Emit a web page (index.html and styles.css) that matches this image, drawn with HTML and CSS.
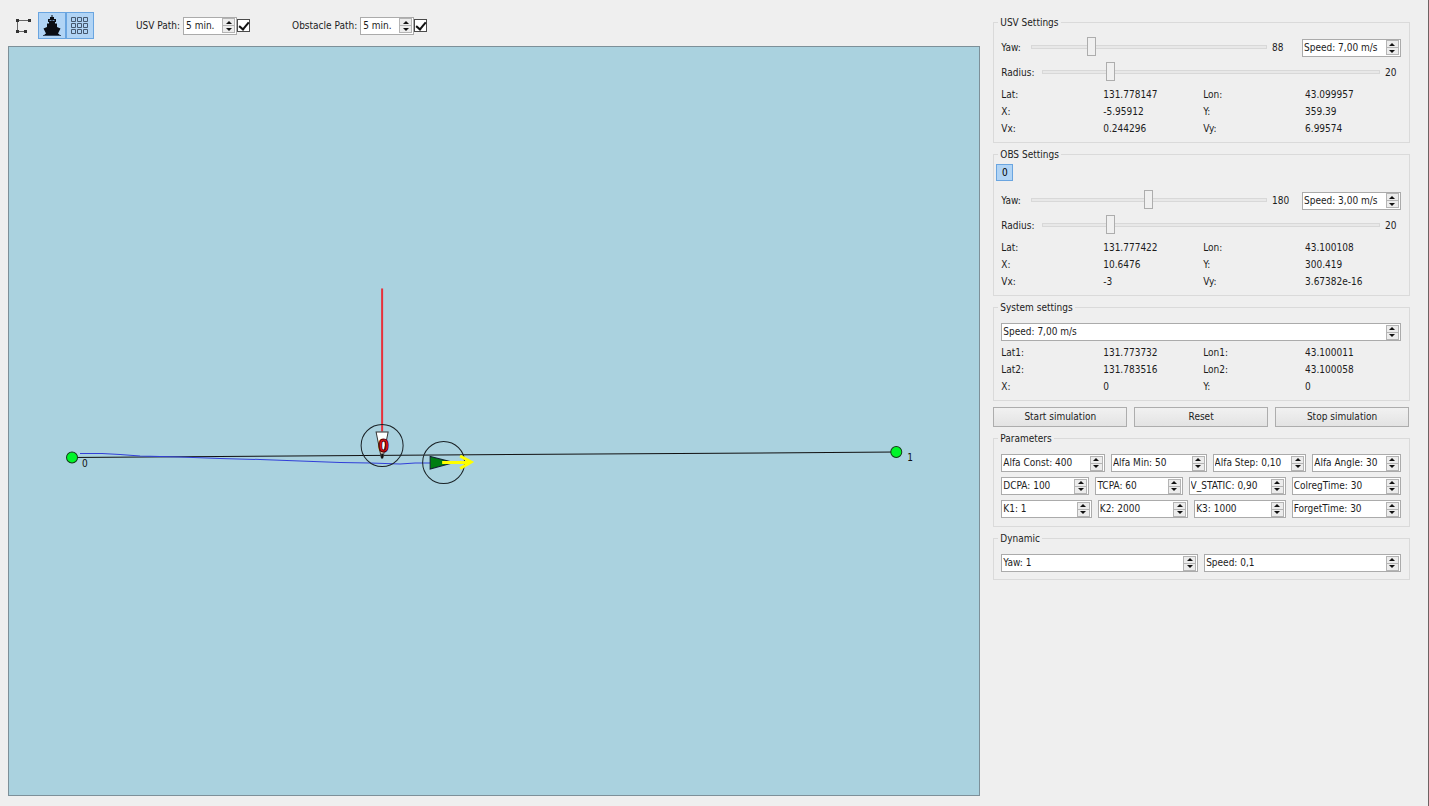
FILE: index.html
```html
<!DOCTYPE html>
<html lang="en">
<head>
<meta charset="utf-8">
<title>USV simulation</title>
<link rel="stylesheet" href="styles.css">
</head>
<body>
<main class="window">
  <section class="view">
    <div class="toolbar">
      <div class="tools">
        <button class="tool" type="button" aria-label="Route">
          <svg width="16" height="16" viewBox="0 0 16 16" fill="none" stroke="#666"><path d="M13 2.500H1.500V13.500H9"/><path d="M0 1h3v3H0zM12 1h3v3h-3zM0 12h3v3H0zM8 12h3v3H8z" fill="#333" stroke="none"/></svg>
        </button>
        <button class="tool tool-on" type="button" aria-label="Vessel">
          <svg width="20" height="22" viewBox="0 0 20 22"><path fill="#0b0e14" d="M9.500 0h1v2H12v2h2v3h-1v1.500h2V12l3.500 1.500L16 18.500l1.500 1v.5h-15v-.5l1.500-1-2.500-5L5 12V8.500h2V7H6V4h2V2h1.500z"/><path stroke="#6d8fb4" fill="none" d="M7.500 5.500h2M10.500 5.500h2"/><path stroke="#33465c" fill="none" d="M1 20.500h18"/></svg>
        </button>
        <button class="tool tool-on" type="button" aria-label="Grid">
          <svg width="18" height="18" viewBox="0 0 18 18" fill="none" stroke="#46586e"><path d="M.5.5h4v4h-4zM6.500.5h4v4h-4zM12.500.5h4v4h-4zM.5 6.500h4v4h-4zM6.500 6.500h4v4h-4zM12.500 6.500h4v4h-4zM.5 12.500h4v4h-4zM6.500 12.500h4v4h-4zM12.500 12.500h4v4h-4z"/></svg>
        </button>
      </div>
      <div class="path-option">
        <label for="usv-path">USV Path:</label>
        <div class="spin spin-short"><input id="usv-path" type="text" value="5 min."><span class="steps"><button type="button" aria-label="Increase"></button><button type="button" aria-label="Decrease"></button></span></div>
        <input class="check" type="checkbox" aria-label="Show USV path" checked>
      </div>
      <div class="path-option">
        <label for="obs-path">Obstacle Path:</label>
        <div class="spin spin-short"><input id="obs-path" type="text" value="5 min."><span class="steps"><button type="button" aria-label="Increase"></button><button type="button" aria-label="Decrease"></button></span></div>
        <input class="check" type="checkbox" aria-label="Show obstacle path" checked>
      </div>
    </div>
    <div class="map">
      <svg class="scene" viewBox="9 48 970 747" preserveAspectRatio="xMidYMid meet">
        <path class="route" d="M72 458L896 452.500"/>
        <path class="usv-trail" d="M80 454h22l18 1 20 1.500 40 1 40 1.500 40 1 40 1.500 40 1.500 30 .5 30 1 15-1h15"/>
        <path class="obs-trail" d="M382 289V432"/>
        <circle class="zone" cx="382" cy="446" r="21"/>
        <path class="obs-body" d="M376 432.500h12l-5 25h-2z"/>
        <path class="obs-tip" d="M382 454v5"/>
        <text class="obs-id" x="383.500" y="453">0</text>
        <circle class="zone" cx="443.500" cy="463" r="21"/>
        <path class="usv-body" d="M430 457v12.500l24-6.500z"/>
        <path class="heading" d="M442 463h28M460 456.500l11 6-11 6.500"/>
        <circle class="waypoint" cx="72" cy="458" r="5.500"/>
        <circle class="waypoint" cx="896" cy="452.500" r="5.500"/>
        <text class="waypoint-id" x="82" y="467">0</text>
        <text class="waypoint-id" x="907" y="461">1</text>
      </svg>
    </div>
  </section>

  <aside class="panel">
    <fieldset class="group">
      <legend>USV Settings</legend>
      <div class="group-body">
        <div class="row">
          <label class="yaw-label" for="usv-yaw">Yaw:</label>
          <input class="slider" id="usv-yaw" type="range" min="0" max="360" value="88">
          <output class="yaw-value">88</output>
          <div class="spin spin-speed"><input type="text" aria-label="USV speed" value="Speed: 7,00 m/s"><span class="steps"><button type="button" aria-label="Increase"></button><button type="button" aria-label="Decrease"></button></span></div>
        </div>
        <div class="row">
          <label for="usv-radius">Radius:</label>
          <input class="slider" id="usv-radius" type="range" min="1" max="100" value="20">
          <output class="radius-value">20</output>
        </div>
        <div class="facts">
          <span>Lat:</span><span>131.778147</span><span>Lon:</span><span>43.099957</span>
          <span>X:</span><span>-5.95912</span><span>Y:</span><span>359.39</span>
          <span>Vx:</span><span>0.244296</span><span>Vy:</span><span>6.99574</span>
        </div>
      </div>
    </fieldset>

    <fieldset class="group">
      <legend>OBS Settings</legend>
      <div class="obs-tabs"><button class="obs-tab" type="button">0</button></div>
      <div class="group-body">
        <div class="row">
          <label class="yaw-label" for="obs-yaw">Yaw:</label>
          <input class="slider" id="obs-yaw" type="range" min="0" max="360" value="180">
          <output class="yaw-value">180</output>
          <div class="spin spin-speed"><input type="text" aria-label="Obstacle speed" value="Speed: 3,00 m/s"><span class="steps"><button type="button" aria-label="Increase"></button><button type="button" aria-label="Decrease"></button></span></div>
        </div>
        <div class="row">
          <label for="obs-radius">Radius:</label>
          <input class="slider" id="obs-radius" type="range" min="1" max="100" value="20">
          <output class="radius-value">20</output>
        </div>
        <div class="facts">
          <span>Lat:</span><span>131.777422</span><span>Lon:</span><span>43.100108</span>
          <span>X:</span><span>10.6476</span><span>Y:</span><span>300.419</span>
          <span>Vx:</span><span>-3</span><span>Vy:</span><span>3.67382e-16</span>
        </div>
      </div>
    </fieldset>

    <fieldset class="group">
      <legend>System settings</legend>
      <div class="group-body">
        <div class="spin"><input type="text" aria-label="System speed" value="Speed: 7,00 m/s"><span class="steps"><button type="button" aria-label="Increase"></button><button type="button" aria-label="Decrease"></button></span></div>
        <div class="facts">
          <span>Lat1:</span><span>131.773732</span><span>Lon1:</span><span>43.100011</span>
          <span>Lat2:</span><span>131.783516</span><span>Lon2:</span><span>43.100058</span>
          <span>X:</span><span>0</span><span>Y:</span><span>0</span>
        </div>
      </div>
    </fieldset>

    <div class="actions">
      <button class="push" type="button">Start simulation</button>
      <button class="push" type="button">Reset</button>
      <button class="push" type="button">Stop simulation</button>
    </div>

    <fieldset class="group">
      <legend>Parameters</legend>
      <div class="group-body params">
        <div class="param-row param-alfa">
          <div class="spin"><input type="text" aria-label="Alfa Const" value="Alfa Const: 400"><span class="steps"><button type="button" aria-label="Increase"></button><button type="button" aria-label="Decrease"></button></span></div>
          <div class="spin"><input type="text" aria-label="Alfa Min" value="Alfa Min: 50"><span class="steps"><button type="button" aria-label="Increase"></button><button type="button" aria-label="Decrease"></button></span></div>
          <div class="spin"><input type="text" aria-label="Alfa Step" value="Alfa Step: 0,10"><span class="steps"><button type="button" aria-label="Increase"></button><button type="button" aria-label="Decrease"></button></span></div>
          <div class="spin"><input type="text" aria-label="Alfa Angle" value="Alfa Angle: 30"><span class="steps"><button type="button" aria-label="Increase"></button><button type="button" aria-label="Decrease"></button></span></div>
        </div>
        <div class="param-row param-cpa">
          <div class="spin"><input type="text" aria-label="DCPA" value="DCPA: 100"><span class="steps"><button type="button" aria-label="Increase"></button><button type="button" aria-label="Decrease"></button></span></div>
          <div class="spin"><input type="text" aria-label="TCPA" value="TCPA: 60"><span class="steps"><button type="button" aria-label="Increase"></button><button type="button" aria-label="Decrease"></button></span></div>
          <div class="spin"><input type="text" aria-label="V_STATIC" value="V_STATIC: 0,90"><span class="steps"><button type="button" aria-label="Increase"></button><button type="button" aria-label="Decrease"></button></span></div>
          <div class="spin"><input type="text" aria-label="ColregTime" value="ColregTime: 30"><span class="steps"><button type="button" aria-label="Increase"></button><button type="button" aria-label="Decrease"></button></span></div>
        </div>
        <div class="param-row param-k">
          <div class="spin"><input type="text" aria-label="K1" value="K1: 1"><span class="steps"><button type="button" aria-label="Increase"></button><button type="button" aria-label="Decrease"></button></span></div>
          <div class="spin"><input type="text" aria-label="K2" value="K2: 2000"><span class="steps"><button type="button" aria-label="Increase"></button><button type="button" aria-label="Decrease"></button></span></div>
          <div class="spin"><input type="text" aria-label="K3" value="K3: 1000"><span class="steps"><button type="button" aria-label="Increase"></button><button type="button" aria-label="Decrease"></button></span></div>
          <div class="spin"><input type="text" aria-label="ForgetTime" value="ForgetTime: 30"><span class="steps"><button type="button" aria-label="Increase"></button><button type="button" aria-label="Decrease"></button></span></div>
        </div>
      </div>
    </fieldset>

    <fieldset class="group">
      <legend>Dynamic</legend>
      <div class="group-body dynamic">
        <div class="param-row param-dynamic">
          <div class="spin"><input type="text" aria-label="Yaw rate" value="Yaw: 1"><span class="steps"><button type="button" aria-label="Increase"></button><button type="button" aria-label="Decrease"></button></span></div>
          <div class="spin"><input type="text" aria-label="Speed rate" value="Speed: 0,1"><span class="steps"><button type="button" aria-label="Increase"></button><button type="button" aria-label="Decrease"></button></span></div>
        </div>
      </div>
    </fieldset>
  </aside>
</main>
</body>
</html>
```

FILE: styles.css
```css
* { box-sizing: border-box; }

body {
  margin: 0;
  background: #efefef;
  color: #1c1c1c;
}

body, input, button {
  font-family: Tahoma, "DejaVu Sans Condensed", Roboto, sans-serif;
  font-size: 10px;
  line-height: 12px;
}

.window {
  display: grid;
  grid-template-columns: minmax(0, 7fr) minmax(0, 3fr);
  column-gap: 13px;
  min-height: 100vh;
  padding: 0 18px 10px 8px;
  border-right: 1px solid #6e6262;
}

.view { display: flex; flex-direction: column; }

.toolbar {
  display: flex;
  align-items: center;
  gap: 42px;
  padding: 12px 2px 7px;
}

.tools { display: flex; }

.tool {
  display: flex;
  align-items: center;
  justify-content: center;
  width: 28px;
  height: 27px;
  padding: 0;
  border: 1px solid transparent;
  background: none;
}

.tool-on { border-color: #6aa5e0; background: #b1d4f5; }

.path-option { display: flex; align-items: center; }
.path-option label { margin-right: 3px; }

.check {
  appearance: none;
  display: grid;
  place-content: center;
  width: 13px;
  height: 13px;
  margin: 0;
  border: 1px solid #4a4a4a;
  background: #fff;
}

.check:checked::before {
  content: "";
  width: 4px;
  height: 8px;
  margin-bottom: 2px;
  border: solid #111;
  border-width: 0 2px 2px 0;
  transform: rotate(40deg);
}

.map {
  flex: 1;
  border: 1px solid #7d9099;
  background: #aad2df;
}

.scene { display: block; width: 100%; height: 100%; }
.route { stroke: #111; fill: none; }
.usv-trail { stroke: #3240d8; fill: none; }
.obs-trail { stroke: #e8303a; stroke-width: 2; fill: none; }
.zone { stroke: #1a2226; fill: none; }
.obs-body { fill: #fff; stroke: #333; }
.obs-tip { stroke: #111; stroke-width: 2; }
.obs-id {
  font: bold 19px "Liberation Sans", sans-serif;
  text-anchor: middle;
  fill: #f01018;
  stroke: #500;
  stroke-width: 1;
}
.usv-body { fill: #007d12; stroke: #123; }
.heading { stroke: #ffff00; stroke-width: 3; fill: none; }
.waypoint { fill: #00f52a; stroke: #123a18; }
.waypoint-id { font-size: 10px; fill: #111; }

.panel {
  display: flex;
  flex-direction: column;
  gap: 5px;
  padding-top: 16px;
}

.group {
  min-width: 0;
  margin: 0;
  padding: 0 2px;
  border: 1px solid #dadada;
}

.group legend {
  height: 12px;
  margin-left: 2px;
  padding: 0 2px;
  line-height: 14px;
}

.group-body { padding: 10px 6px 5px 5px; }

.row {
  display: flex;
  align-items: center;
  height: 19px;
  margin-bottom: 6px;
}

.row + .row { margin-bottom: 4px; }
.row label { margin-right: 8px; line-height: 14px; }
.row .yaw-label { margin-right: 10px; }

.slider {
  appearance: none;
  flex: 1;
  min-width: 0;
  height: 19px;
  margin: 0 0 1px;
  background: none;
}

.slider::-webkit-slider-runnable-track {
  height: 4px;
  border: 1px solid #d8d8d8;
  background: #e8e8e8;
}

.slider::-webkit-slider-thumb {
  appearance: none;
  width: 9px;
  height: 19px;
  margin-top: -9px;
  border: 1px solid #adadad;
  background: #f0f0f0;
}

.yaw-value { width: 30px; margin-left: 5px; line-height: 14px; }
.radius-value { width: 16px; margin-left: 5px; line-height: 14px; }

.spin {
  display: flex;
  align-items: center;
  min-width: 0;
  height: 18px;
  padding-right: 1px;
  border: 1px solid #ababab;
  background: #fff;
}

.spin input {
  flex: 1;
  width: 0;
  min-width: 0;
  height: 16px;
  padding: 0 0 0 1px;
  border: 0;
  background: none;
  color: inherit;
  line-height: 16px;
}

.spin-short { width: 54px; }
.spin-short input { padding-left: 2px; }
.spin-speed { width: 99px; }

.steps { display: flex; flex-direction: column; width: 13px; }

.steps button {
  display: grid;
  place-content: center;
  height: 8px;
  padding: 0;
  border: 1px solid #b4b4b4;
  background: #ececec;
}

.steps button + button { height: 7px; border-top: 0; }

.steps button::before {
  content: "";
  border: 3px solid transparent;
  border-top-width: 0;
  border-bottom-color: #111;
}

.steps button + button::before {
  border-width: 3px 3px 0;
  border-top-color: #111;
}

.facts {
  display: grid;
  grid-template-columns: 102fr 100fr 102fr 96fr;
  grid-auto-rows: 17px;
  align-items: center;
}

.spin + .facts { margin-top: 3px; }

.obs-tabs { display: flex; padding-top: 4px; }

.obs-tab {
  width: 17px;
  height: 17px;
  padding: 0;
  border: 1px solid #6aa5e0;
  background: #b1d4f5;
}

.actions {
  display: grid;
  grid-template-columns: repeat(3, 1fr);
  gap: 7px;
  padding: 1px 1px 0 0;
}

.push {
  height: 20px;
  padding: 0;
  border: 1px solid #adadad;
  background: linear-gradient(#f1f1f1, #e3e3e3);
  color: inherit;
}

.params { display: grid; gap: 5px; padding-bottom: 8px; }
.dynamic { padding-bottom: 7px; }

.param-row { display: grid; gap: 6px; }
.param-alfa { grid-template-columns: 104fr 96fr 94fr 89fr; }
.param-cpa { grid-template-columns: 88fr 87fr 97fr 109fr; }
.param-k { grid-template-columns: 91fr 91fr 92fr 110fr; }
.param-dynamic { grid-template-columns: 1fr 1fr; }
```
